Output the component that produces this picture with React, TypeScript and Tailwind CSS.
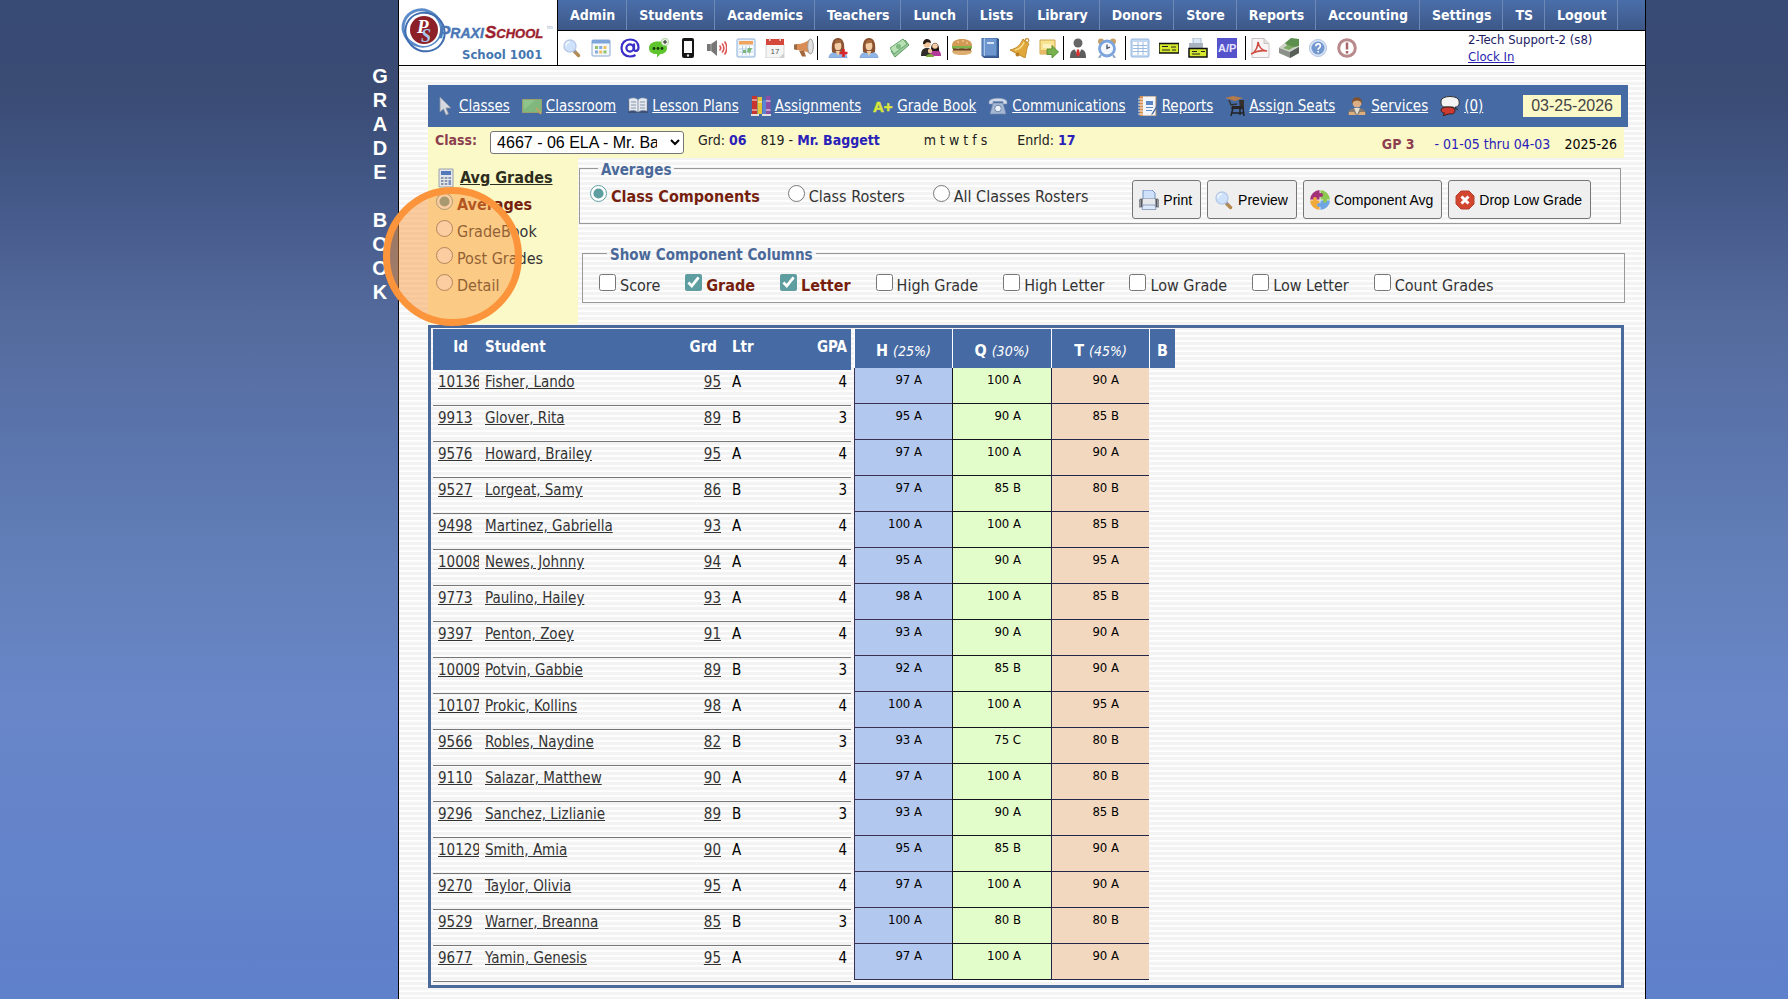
import React, {useState} from "react";

const menuItems = [
    "Admin", "Students", "Academics", "Teachers", "Lunch", "Lists", "Library",
    "Donors", "Store", "Reports", "Accounting", "Settings", "TS", "Logout",
];

const toolGroups = [
    {className: "gap-[9px] pl-1 pr-[3px]", icons: ["search", "calendar", "at", "chat", "mobile", "speaker", "schedule", "date", "megaphone"]},
    {className: "gap-[11px] pl-[10px] pr-1.5", icons: ["userAdd", "user", "money", "family"]},
    {className: "gap-[9px] px-1", icons: ["burger", "book", "bell", "noteNext"]},
    {className: "gap-[9px] pl-1 pr-2", icons: ["staff", "clock"]},
    {className: "gap-[9px] pl-1 pr-2", icons: ["sheet", "check", "printCheck", "ap"]},
    {className: "gap-[9px] pl-1", icons: ["pdf", "cash", "help", "alert"]},
];

const classLinks = [
    {icon: "cursor", label: "Classes"},
    {icon: "board", label: "Classroom"},
    {icon: "openBook", label: "Lesson Plans"},
    {icon: "books", label: "Assignments"},
    {icon: "aPlus", label: "Grade Book"},
    {icon: "phone", label: "Communications"},
    {icon: "notebook", label: "Reports"},
    {icon: "desk", label: "Assign Seats"},
    {icon: "services", label: "Services"},
    {icon: "bubbles", label: "(0)"},
];

const views = ["Averages", "GradeBook", "Post Grades", "Detail"];
const rosters = ["Class Components", "Class Rosters", "All Classes Rosters"];
const columns = ["Score", "Grade", "Letter", "High Grade", "High Letter", "Low Grade", "Low Letter", "Count Grades"];

const actions = [
    {icon: "printer", label: "Print"},
    {icon: "search", label: "Preview"},
    {icon: "puzzle", label: "Component Avg"},
    {icon: "drop", label: "Drop Low Grade"},
];

interface Student {
    id: string;
    name: string;
    grade: number;
    letter: string;
    gpa: number;
    parts: string[];
}

const students: Student[] = [
    {id: "10136", name: "Fisher, Lando", grade: 95, letter: "A", gpa: 4, parts: ["97 A", "100 A", "90 A"]},
    {id: "9913", name: "Glover, Rita", grade: 89, letter: "B", gpa: 3, parts: ["95 A", "90 A", "85 B"]},
    {id: "9576", name: "Howard, Brailey", grade: 95, letter: "A", gpa: 4, parts: ["97 A", "100 A", "90 A"]},
    {id: "9527", name: "Lorgeat, Samy", grade: 86, letter: "B", gpa: 3, parts: ["97 A", "85 B", "80 B"]},
    {id: "9498", name: "Martinez, Gabriella", grade: 93, letter: "A", gpa: 4, parts: ["100 A", "100 A", "85 B"]},
    {id: "10008", name: "Newes, Johnny", grade: 94, letter: "A", gpa: 4, parts: ["95 A", "90 A", "95 A"]},
    {id: "9773", name: "Paulino, Hailey", grade: 93, letter: "A", gpa: 4, parts: ["98 A", "100 A", "85 B"]},
    {id: "9397", name: "Penton, Zoey", grade: 91, letter: "A", gpa: 4, parts: ["93 A", "90 A", "90 A"]},
    {id: "10009", name: "Potvin, Gabbie", grade: 89, letter: "B", gpa: 3, parts: ["92 A", "85 B", "90 A"]},
    {id: "10107", name: "Prokic, Kollins", grade: 98, letter: "A", gpa: 4, parts: ["100 A", "100 A", "95 A"]},
    {id: "9566", name: "Robles, Naydine", grade: 82, letter: "B", gpa: 3, parts: ["93 A", "75 C", "80 B"]},
    {id: "9110", name: "Salazar, Matthew", grade: 90, letter: "A", gpa: 4, parts: ["97 A", "100 A", "80 B"]},
    {id: "9296", name: "Sanchez, Lizlianie", grade: 89, letter: "B", gpa: 3, parts: ["93 A", "90 A", "85 B"]},
    {id: "10129", name: "Smith, Amia", grade: 90, letter: "A", gpa: 4, parts: ["95 A", "85 B", "90 A"]},
    {id: "9270", name: "Taylor, Olivia", grade: 95, letter: "A", gpa: 4, parts: ["97 A", "100 A", "90 A"]},
    {id: "9529", name: "Warner, Breanna", grade: 85, letter: "B", gpa: 3, parts: ["100 A", "80 B", "80 B"]},
    {id: "9677", name: "Yamin, Genesis", grade: 95, letter: "A", gpa: 4, parts: ["97 A", "100 A", "90 A"]},
];

const components = [
    {code: "H", weight: "(25%)", cell: "bg-[#b3c8ee] border-[#3b3050]"},
    {code: "Q", weight: "(30%)", cell: "bg-[#e3fdca] border-[#14141c]"},
    {code: "T", weight: "(45%)", cell: "bg-[#f2d8bf] border-[#23264a]"},
];

const woman = (
    <>
        <path d="M1 20c0-4 3-6 9-6s9 2 9 6z" fill="#8fb4e6" stroke="#6f93c8" strokeWidth=".6" />
        <path d="M4 14C3 5 5 0 10 0s7 5 6 14l-3 1H7z" fill="#8a5230" />
        <ellipse cx="10" cy="8" rx="3.400" ry="4.200" fill="#f3cda6" />
        <path d="M6.500 7c1-3 5-1 7-3l-1-2H8z" fill="#a4683c" />
        <path d="M7.500 13h5L10 18z" fill="#f3cda6" />
    </>
);

const greenCheck = (
    <>
        <path d="M0 5.500h20v9.500H0z" fill="#d5e82c" stroke="#111" strokeWidth="1.500" />
        <path d="M3 8.500h6M3 12h8M13 12h4M12 9h5" stroke="#222" />
    </>
);

const icons: Record<string, React.ReactNode> = {
    search: (
        <>
            <path d="m12.500 13.500 4 4" stroke="#b58a52" strokeWidth="3.500" strokeLinecap="round" />
            <path d="m12 12 2 2" stroke="#8c94a3" strokeWidth="2" />
            <circle cx="8" cy="8" r="6" fill="#cfe2fb" stroke="#b9cbe8" strokeWidth="1.500" />
            <path d="M4 8c0-3 2-4 4-4" fill="none" stroke="#f4f9ff" strokeWidth="1.500" />
        </>
    ),
    calendar: (
        <>
            <rect x="1" y="2" width="18" height="16" rx="1" fill="#f4f8fd" stroke="#88a7cf" />
            <path d="M1 2h18v3.500H1z" fill="#7ea5da" />
            <path d="M4 8h3v3H4zM12.500 12.500h3v3h-3z" fill="#8fc06a" />
            <path d="M8.200 8h3v3h-3zM4 12.500h3v3H4z" fill="#86a9dd" />
            <path d="M12.500 8h3v3h-3zM8.200 12.500h3v3h-3z" fill="#edc15e" />
        </>
    ),
    at: (
        <>
            <circle cx="10" cy="10" r="3.600" fill="none" stroke="#3a30c8" strokeWidth="2.200" />
            <path d="M14 5.500V11c0 3 4.500 2.500 4.500-1.500C18.500 4.500 15 1.500 10 1.500S1.500 5 1.500 10s3.500 8.500 8.500 8.500c2.500 0 4-.5 5.500-1.500" fill="none" stroke="#3a30c8" strokeWidth="2.200" />
        </>
    ),
    chat: (
        <>
            <path d="M0 10c0-4 3.500-6.500 9-6.500s9 2.500 9 6.500-3.500 6-6.500 6L8 19.500V16c-5 0-8-2-8-6z" fill="#5fc52f" />
            <circle cx="5" cy="10.500" r="1.400" fill="#153a08" />
            <circle cx="9" cy="10.500" r="1.400" fill="#153a08" />
            <circle cx="13" cy="10.500" r="1.400" fill="#153a08" />
            <circle cx="16" cy="4" r="3.700" fill="#e6f3de" stroke="#98bd86" strokeWidth=".6" />
            <path d="M14 4h4M16 2v4" stroke="#222" />
        </>
    ),
    mobile: (
        <>
            <rect x="4" y="0" width="12" height="20" rx="2" fill="#161616" />
            <path d="M6 3h8v12H6z" fill="#fafafa" />
            <circle cx="10" cy="17.500" r="1.200" fill="#ddd" />
        </>
    ),
    speaker: (
        <>
            <path d="M0 6h4l6-4v16l-6-5H0z" fill="#777" />
            <path d="M4 6v7" stroke="#aaa" />
            <path d="M12.500 7.500c1.500 1.500 1.500 3.500 0 5M15 5.500c2.500 2.500 2.500 6.500 0 9M17.500 3.500c3 3.500 3 9.500 0 13" fill="none" stroke="#dc5a5a" strokeWidth="1.700" />
        </>
    ),
    schedule: (
        <>
            <rect x="1" y="1" width="18" height="18" rx="1" fill="#e9f1fb" stroke="#8cafd8" />
            <path d="M3 3h14v3.500H3z" fill="#f0a45e" />
            <path d="M3 8h14v9H3z" fill="#fff" />
            <path d="M3 11h14M3 14h14M6.500 8v9M10 8v9M13.500 8v9" stroke="#b3cbe6" />
            <path d="M7 12h3v3H7zM12 10h4l-2 5-3-1z" fill="#79b678" />
        </>
    ),
    date: (
        <>
            <path d="M1 6h18v14H1z" fill="#f5f5f5" stroke="#bbb" strokeWidth=".6" />
            <path d="M1 1h18v6H1z" fill="#d5473a" />
            <path d="M4 0h1.500v3H4zM14.500 0H16v3h-1.500z" fill="#f7dcd8" />
            <text x="5.500" y="16" fontSize="8" fontFamily="Liberation Sans, sans-serif" fill="#555">17</text>
            <path d="m19 15-5 5h5z" fill="#cfcfcf" />
        </>
    ),
    megaphone: (
        <>
            <path d="M0 6.500 3 6v6l-3-.5z" fill="#9a6a45" />
            <path d="M3 6c5 0 9-1.500 13-5v15c-4-3-8-4-13-4z" fill="#d98d55" />
            <ellipse cx="16.500" cy="8.500" rx="2.800" ry="7.500" fill="#e2e2e2" stroke="#999" />
            <path d="M5 12.500h5l2 6H8z" fill="#a3683e" />
        </>
    ),
    userAdd: (
        <>
            {woman}
            <path d="M15.500 11v8M11.500 15h8" stroke="#d8262a" strokeWidth="2.600" />
        </>
    ),
    user: woman,
    money: (
        <>
            <path d="M1 13 15 2l4 5L5 19z" fill="#9bcb9b" stroke="#5f9c66" />
            <path d="m0 10 13-9 4 5L4 16z" fill="#b9dfb4" stroke="#68a56d" />
            <circle cx="8.500" cy="8.500" r="2.500" fill="#7dba80" />
        </>
    ),
    family: (
        <>
            <path d="M0 18c0-6 2-8 6-8s5 2 5 8z" fill="#2f2c2a" />
            <path d="M9 18c0-5 2-7 5-7s6 2 6 7z" fill="#b33a98" />
            <circle cx="6" cy="6" r="3.800" fill="#f0c79c" />
            <path d="M2 6c0-7 8-6 8-1-3-1-5-1-6 1z" fill="#2b1c16" />
            <path d="M10 13C9 2 19 2 18 13z" fill="#241815" />
            <circle cx="14" cy="8" r="2.800" fill="#f3cda6" />
            <circle cx="9" cy="13" r="2.200" fill="#f0c79c" />
            <path d="M5 19c0-4 8-4 8 0z" fill="#7aa93a" />
        </>
    ),
    burger: (
        <>
            <path d="M0 8c0-5 4-7 10-7s10 2 10 7z" fill="#d39a56" />
            <path d="M0 8h20v2.500c-3 2-4-1-7 0s-4 1-6 0-5 2-7 0z" fill="#7db34a" />
            <path d="M1 10.500h18V13H1z" fill="#6e4022" />
            <path d="M0 12.500h20c0 3-3 4.500-10 4.500S0 15.500 0 12.500z" fill="#dcaf70" />
            <path d="M5 4h2M10 3h2M14 5h2" stroke="#f7dfb4" />
        </>
    ),
    book: (
        <>
            <path d="M1 0h15l2 1v19H3l-2-2z" fill="#35578c" />
            <path d="M1 0h15v18H1z" fill="#6d96cf" stroke="#40669f" />
            <path d="M3.500 0v18" stroke="#a6c3ea" />
            <path d="M6 4h7v2H6z" fill="#d5e3f6" />
        </>
    ),
    bell: (
        <>
            <path d="M0 12C8 10 10 7 13 1l6 5c-3 4-2 8-4 14z" fill="#e0a83a" stroke="#b57d20" strokeWidth=".8" />
            <path d="M5 12c5-1 8-5 9-8" fill="none" stroke="#f8dc8c" strokeWidth="1.500" />
            <circle cx="7.500" cy="16.500" r="2" fill="#b97e24" />
            <circle cx="17" cy="2.500" r="1.800" fill="none" stroke="#c58f2f" strokeWidth="1.200" />
        </>
    ),
    noteNext: (
        <>
            <path d="M1 2h15v14H1z" fill="#f8e391" stroke="#cfa44d" />
            <path d="M4 6h8v4H4z" fill="#fcf2c4" />
            <path d="M1 12h15v4H1z" fill="#e8b966" />
            <path d="M8 11h5V7.500l6.500 6.500-6.500 6v-3.500H8z" fill="#79b24c" stroke="#4b8730" strokeWidth=".8" />
        </>
    ),
    staff: (
        <>
            <path d="M2 20c0-7 2-9 8-9s8 2 8 9z" fill="#5d5d5d" />
            <circle cx="10" cy="5" r="4.500" fill="#666" />
            <path d="m6.500 11 3.500 7 3.500-7z" fill="#f7f7f7" />
            <path d="m9 11.500h2l1 5-2 2.500-2-2.500z" fill="#d63232" />
        </>
    ),
    clock: (
        <>
            <circle cx="4" cy="3.500" r="3" fill="#c7a066" />
            <circle cx="16" cy="3.500" r="3" fill="#c7a066" />
            <path d="m4 17-2 3M16 17l2 3" stroke="#8ea4c4" strokeWidth="2" />
            <circle cx="10" cy="10.500" r="7.500" fill="#f4f8fd" stroke="#7ba3dc" strokeWidth="2.800" />
            <path d="M10 6.500v4l3-1.500" fill="none" stroke="#3f4a5c" strokeWidth="1.300" />
        </>
    ),
    sheet: (
        <>
            <rect x="1" y="1" width="18" height="18" rx="1" fill="#c5d8f2" stroke="#9ab8e0" />
            <path d="M3 4h14v13H3z" fill="#fff" />
            <path d="M3 7.500h14M3 10.500h14M3 13.500h14M8 4v13M13 4v13" stroke="#9dbbe2" />
        </>
    ),
    check: greenCheck,
    printCheck: (
        <>
            <path d="M5 0h8v6H5z" fill="#dce9f8" stroke="#8fa3ba" strokeWidth=".7" />
            <path d="M1 5h14v6H1z" fill="#a9b4c0" />
            <path d="M1 10.500h18v8.500H1z" fill="#d5e82c" stroke="#111" strokeWidth="1.500" />
            <path d="M4 13.500h5M4 16h8M13 13.500h4" stroke="#222" />
        </>
    ),
    ap: (
        <>
            <path d="M0 0h20v20H0z" fill="#5553cb" />
            <text x="1" y="14" fontSize="11" fontWeight="bold" fontFamily="Liberation Sans, sans-serif" fill="#e4e3fb">A/P</text>
        </>
    ),
    pdf: (
        <>
            <path d="M2 .5h12l5 5v14H2z" fill="#f7f5f5" stroke="#c9c2c2" />
            <path d="M14 .5v5h5" fill="#e3dede" stroke="#c9c2c2" />
            <path d="M1 16c5-2 7-8 7-12 1 6 5 9 9 9-5-1-10 0-16 3z" fill="none" stroke="#cf4f45" strokeWidth="1.600" />
        </>
    ),
    cash: (
        <>
            <path d="m0 10 6-5 14 4v6l-9 5-11-5z" fill="#8b9188" />
            <path d="m0 10 11 4 9-5-8-4-6 0z" fill="#cfd3ca" />
            <path d="m11 14 9-5v6l-9 5z" fill="#585e58" />
            <path d="m6 5 6-5 8 1v7l-9 2z" fill="#5c8f4d" />
            <path d="m4 10 5-3 6 2-5 3z" fill="#7caa63" />
        </>
    ),
    help: (
        <>
            <circle cx="10" cy="10" r="8.500" fill="#d9e4f5" stroke="#b0c4e2" />
            <circle cx="10" cy="10" r="6.500" fill="#7397cf" />
            <path d="M7.800 8.200c0-3.200 4.600-3 4.600-.2 0 1.800-2.300 1.900-2.300 3.700M10.100 13v1.600" fill="none" stroke="#fff" strokeWidth="1.600" />
        </>
    ),
    alert: (
        <>
            <circle cx="10" cy="10" r="8.300" fill="#fff" stroke="#b98a8c" strokeWidth="3" />
            <path d="M10 4.500v7M10 13v2.500" stroke="#a8676b" strokeWidth="2.500" />
        </>
    ),
    cursor: (
        <path d="M5 1v15l3.500-3 2.500 6 2.500-1-2.500-6h5z" fill="#d6dae0" stroke="#8a929e" strokeWidth=".8" />
    ),
    board: (
        <>
            <path d="M.5 3.500h19v13H.5z" fill="#7fb77c" stroke="#9aa06c" />
            <path d="M1 4h12L2 14z" fill="#8fc48b" />
            <path d="m14 12 5 6" stroke="#c6a45f" strokeWidth="1.800" />
        </>
    ),
    openBook: (
        <>
            <path d="M0 5h20v12H0z" fill="#3d5078" />
            <path d="M10 4C7 1 4 2 1 3v12c3-1 6-1 9 1 3-2 6-2 9-1V3c-3-1-6-2-9 1z" fill="#e6eaf0" stroke="#9aa6b8" strokeWidth=".6" />
            <path d="M10 4v12M3 6h5M3 9h5M3 12h5M12 6h5M12 9h5M12 12h5" stroke="#8794a9" />
        </>
    ),
    books: (
        <>
            <path d="M1 0h5v19H1z" fill="#c8352f" />
            <path d="M6.500 1H11v17H6.500z" fill="#e4c535" />
            <path d="M11.500 4h3.500v14h-3.500z" fill="#5a86d4" />
            <path d="M15 0h4.500v19H15z" fill="#8d4ea6" />
            <path d="M1 4h5M1 14h5M7 6h4M15 5h4.500M15 14h4.500" stroke="#f7f2e4" />
            <path d="M0 18h8v2H0zM11 18h9v2h-9z" fill="#e4e1dc" />
        </>
    ),
    aPlus: (
        <text x="0" y="16" fontSize="15" fontWeight="bold" fontFamily="Liberation Sans, sans-serif" fill="#dbe63a" stroke="#dbe63a" strokeWidth=".6">A+</text>
    ),
    phone: (
        <>
            <path d="M1 6c0-5 18-5 18 0v2h-4V5.500H5V8H1z" fill="#cfd9e8" stroke="#7f94b5" strokeWidth=".6" />
            <path d="M5 7h10l3 11H2z" fill="#a4b7d3" stroke="#6f86a9" strokeWidth=".6" />
            <circle cx="10" cy="12.500" r="3.300" fill="#eef3fa" stroke="#6f86a9" />
        </>
    ),
    notebook: (
        <>
            <path d="M2 0h16v20H2z" fill="#f2f5fa" stroke="#a98563" />
            <path d="M2 0h3v20H2z" fill="#d98f4d" />
            <path d="M0 3h5M0 6h5M0 9h5M0 12h5M0 15h5M0 18h5" stroke="#eee" />
            <path d="M8 5h7v4H8zM8 11h7v1H8zM8 14h6v1H8z" fill="#5c86c4" />
            <path d="m19 9-5 8-1 2 2-1 5-8z" fill="#4b6ba0" />
        </>
    ),
    desk: (
        <>
            <path d="M0 2 8 0l10 2-8 3z" fill="#b47a4a" />
            <path d="m4 4 2 5 6-1" fill="none" stroke="#333" strokeWidth="1.500" />
            <path d="M14 4h5v9h-4z" fill="#34302e" />
            <path d="M7 10h11v3H6z" fill="#2a2625" />
            <path d="m8 12-2 8M15 12v7M18 12l1 8M7 17h11" stroke="#222" strokeWidth="1.500" />
        </>
    ),
    services: (
        <>
            <path d="M1 19c0-5 3-7 9-7s9 2 9 7z" fill="#857a6d" />
            <circle cx="10" cy="7" r="4.500" fill="#dcae86" />
            <path d="M5 8C4-1 16-1 15 8c-1-3-3-3.500-5-3.500S6 5 5 8z" fill="#80522c" />
            <path d="m7 12 3 7 3-7z" fill="#e4dfd3" />
            <path d="M2 16h5l2 3H2zM18 16h-5l-2 3h7z" fill="#dcae7d" />
        </>
    ),
    bubbles: (
        <>
            <path d="M1 5c0-6 18-6 18 0 1 5-2 6-4 6l3 3-5-3H5C2 11 1 9 1 5z" fill="#f4f4f4" stroke="#333" />
            <path d="M1 14c0-4 14-4 14 0s-2 4-7 4l-5 2 1.500-3C3 17 1 16 1 14z" fill="#cf3a30" stroke="#431c1c" />
        </>
    ),
    calculator: (
        <>
            <path d="M3 1h14v18H3z" fill="#e4e6ea" stroke="#9aa1ab" />
            <path d="M5 3h10v4H5z" fill="#5479ba" />
            <path d="M5 9h2.500v2H5zM8.800 9h2.500v2H8.800zM5 12h2.500v2H5zM8.800 12h2.500v2H8.800zM5 15h2.500v2H5zM8.800 15h2.500v2H8.800z" fill="#8b96ab" />
            <path d="M12.500 9H15v2h-2.500zM12.500 12H15v5h-2.500z" fill="#7f92bd" />
        </>
    ),
    printer: (
        <>
            <path d="M4 0h9l3 3v7H4z" fill="#cfe0fa" stroke="#7592c4" />
            <path d="M1 9h18l1 3v5H0v-5z" fill="#a9adb3" stroke="#6c7077" strokeWidth=".8" />
            <path d="M4 9h12v6H4z" fill="#e6e8eb" />
            <path d="M2.500 9v8M17.500 9v8" stroke="#56595e" strokeWidth="1.500" />
            <path d="M4 15h12l1 4.500H3z" fill="#dce8fb" stroke="#8093b5" strokeWidth=".8" />
        </>
    ),
    puzzle: (
        <>
            <path d="M10 10V0A10 10 0 0 0 0 10z" fill="#a3317a" />
            <path d="M10 10h10A10 10 0 0 0 10 0z" fill="#8cc751" />
            <path d="M10 10H0a10 10 0 0 0 10 10z" fill="#f0a93a" />
            <path d="M10 10v10a10 10 0 0 0 10-10z" fill="#6ea5e4" />
            <path d="M10 0v3.200M10 6.800v6.400M10 16.800V20M0 10h3.200M6.800 10h6.400M16.800 10H20" stroke="#f4f4f4" strokeWidth=".9" />
            <circle cx="11" cy="5" r="2" fill="#a3317a" />
            <circle cx="15" cy="11" r="2" fill="#8cc751" />
            <circle cx="9" cy="15" r="2" fill="#6ea5e4" />
            <circle cx="5" cy="9" r="2" fill="#f0a93a" />
        </>
    ),
    drop: (
        <>
            <path d="M6 1h8l5 5v8l-5 5H6l-5-5V6z" fill="#d2452f" stroke="#b5402f" />
            <path d="m6.500 6.500 7 7M13.500 6.500l-7 7" stroke="#fff" strokeWidth="3" />
        </>
    ),
};

function Icon({name}: { name: string }) {
    return (
        <svg viewBox="0 0 20 20" className="size-5 shrink-0" aria-hidden="true">{icons[name]}</svg>
    );
}

function Logo() {
    return (
        <svg viewBox="0 0 158 65" className="h-[65px] w-[158px] shrink-0">
            <ellipse cx="23" cy="28" rx="19" ry="18" fill="none" stroke="#5b8bc8" strokeWidth="3" transform="rotate(20 23 28)" />
            <ellipse cx="26" cy="32" rx="20" ry="19" fill="none" stroke="#3f6db0" strokeWidth="2" transform="rotate(35 26 32)" />
            <circle cx="25" cy="30" r="16" fill="#fff" />
            <circle cx="25" cy="30" r="14" fill="#8c1f28" />
            <text x="18" y="33" fontSize="19" fontWeight="bold" fontStyle="italic" fontFamily="Liberation Serif, serif" fill="#fff">P</text>
            <text x="22" y="42" fontSize="18" fontWeight="bold" fontStyle="italic" fontFamily="Liberation Serif, serif" fill="#a9c6ea">S</text>
            <g fontWeight="bold" fontStyle="italic" fontFamily="Liberation Sans, sans-serif">
                <text x="40" y="38" fill="#4a77b5" stroke="#4a77b5" strokeWidth=".4" fontSize="17">P<tspan fontSize="14">RAXI</tspan></text>
                <text x="86" y="38" fill="#9c1f2e" stroke="#9c1f2e" strokeWidth=".4" fontSize="17">S<tspan fontSize="13">CHOOL</tspan></text>
            </g>
            <text x="148" y="29" fontSize="5" fontFamily="Liberation Sans, sans-serif" fill="#8fa9cc">tm</text>
            <text x="63" y="59" fontSize="13" fontWeight="bold" fontFamily="DejaVu Sans Condensed, DejaVu Sans, sans-serif" fill="#4576b0">School 1001</text>
        </svg>
    );
}

interface ChoiceProps {
    type: "radio" | "checkbox";
    name: string;
    label: string;
    checked: boolean;
    onChange: () => void;
}

function Choice(props: ChoiceProps) {
    return (
        <label className="flex items-start gap-1 text-base leading-6 text-[#333]">
            <input type={props.type} name={props.name} checked={props.checked} onChange={props.onChange} className="size-[17px] shrink-0 accent-[#5f9ea0]" />
            <span className={props.checked ? "font-bold text-[#761f0e]" : ""}>{props.label}</span>
        </label>
    );
}

function Header() {
    return (
        <header className="flex border-b border-black bg-white">
            <Logo />
            <div className="min-w-0 flex-1 border-l border-black">
                <nav className="flex h-[31px] border-b border-black bg-linear-to-b from-[#4a6eaa] to-[#3d5888]">
                    {menuItems.map((item) => (
                        <a key={item} href="#" className="border-r border-[#6d88b5] pr-[11px] pl-3 text-sm leading-[30px] font-bold text-white">{item}</a>
                    ))}
                </nav>
                <div className="flex items-center justify-between">
                    <div className="flex h-[30px] items-center">
                        {toolGroups.map((group, index) => (
                            <div key={index} className={index > 0 ? "flex border-l border-black" : "flex"}>
                                <div className={"flex h-6 items-center " + group.className}>
                                    {group.icons.map((icon) => (
                                        <button key={icon} type="button" aria-label={icon}><Icon name={icon} /></button>
                                    ))}
                                </div>
                            </div>
                        ))}
                    </div>
                    <div className="flex w-[177px] flex-col items-start text-[13px] leading-[17px] text-[#1c1c64]">
                        <span>2-Tech Support-2 (s8)</span>
                        <a href="#" className="text-[#2a1fb0] underline">Clock In</a>
                    </div>
                </div>
            </div>
        </header>
    );
}

function ClassBar() {
    return (
        <div className="mr-1 flex h-[31px] items-start bg-[#fbf9c8] px-[7px] text-sm leading-[27px] text-[#222]">
            <label htmlFor="class" className="font-bold text-[#8c3f4f]">Class:</label>
            <select id="class" className="mt-1 ml-[13px] h-[23px] w-[194px] rounded-[3px] border border-[#767676] bg-white pr-2.5 pl-0.5 font-['Liberation_Sans',Arial,sans-serif] text-base leading-5 text-black">
                <option>4667 - 06 ELA - Mr. Baggett</option>
            </select>
            <span className="ml-3.5">Grd: <b className="text-[#2a22b8]">06</b></span>
            <span className="ml-3.5">819 - <b className="text-[#2a22b8]">Mr. Baggett</b></span>
            <span className="ml-11">m t w t f s</span>
            <span className="ml-[30px]">Enrld: <b className="text-[#2a22b8]">17</b></span>
            <div className="ml-auto flex pt-1">
                <b className="text-[#8c3f4f]">GP 3</b>
                <span className="ml-5 text-[#2a22b8]">- 01-05 thru 04-03</span>
                <span className="ml-3.5 text-black">2025-26</span>
            </div>
        </div>
    );
}

function StudentTable() {
    return (
        <table className="w-[418px] table-fixed border-separate border-spacing-0 text-[15px] leading-5">
            <colgroup>
                <col className="w-[46px]" />
                <col className="w-[200px]" />
                <col className="w-[42px]" />
                <col className="w-[60px]" />
                <col />
            </colgroup>
            <thead>
                <tr className="bg-[#466aa3] align-top text-white">
                    <th className="h-[41px] pt-2 pr-[11px] text-right">Id</th>
                    <th className="pt-2 pl-1.5 text-left">Student</th>
                    <th className="pt-2 pr-1 text-right">Grd</th>
                    <th className="pt-2 pl-[11px] text-left">Ltr</th>
                    <th className="pt-2 pr-1 text-right">GPA</th>
                </tr>
            </thead>
            <tbody>
                {students.map((student) => (
                    <tr key={student.id} className="align-top text-[#333]">
                        <td className="h-9 overflow-hidden border-b border-[#777] pt-0.5 pl-[5px]"><a href="#" className="underline">{student.id}</a></td>
                        <td className="border-b border-[#777] pt-0.5 pl-1.5"><a href="#" className="underline">{student.name}</a></td>
                        <td className="border-b border-[#777] pt-0.5 text-right"><a href="#" className="underline">{student.grade}</a></td>
                        <td className="border-b border-[#777] pt-0.5 pl-[11px] text-black">{student.letter}</td>
                        <td className="border-b border-[#777] pt-0.5 pr-1 text-right text-black">{student.gpa}</td>
                    </tr>
                ))}
            </tbody>
        </table>
    );
}

function ComponentTable() {
    return (
        <table className="w-[321px] table-fixed border-separate border-spacing-0 text-[13px] leading-5 text-black">
            <colgroup>
                <col className="w-[98px]" />
                <col className="w-[99px]" />
                <col className="w-[98px]" />
                <col />
            </colgroup>
            <thead>
                <tr className="bg-[#466aa3] align-top text-white">
                    {components.map((part) => (
                        <th key={part.code} className="h-[39px] border-l border-white pt-3 text-base leading-5">
                            {part.code} <i className="text-sm leading-5 font-normal">{part.weight}</i>
                        </th>
                    ))}
                    <th className="border-l border-white pt-3 text-base leading-5">B</th>
                </tr>
            </thead>
            <tbody>
                {students.map((student) => (
                    <tr key={student.id} className="align-top">
                        {components.map((part, index) => (
                            <td key={part.code} className={"h-9 border-b border-l pt-0.5 pr-[30px] text-right " + part.cell}>{student.parts[index]}</td>
                        ))}
                        <td></td>
                    </tr>
                ))}
            </tbody>
        </table>
    );
}

function App() {
    const [view, setView] = useState("Averages");
    const [roster, setRoster] = useState("Class Components");
    const [shown, setShown] = useState(["Grade", "Letter"]);

    const onColumnChange = (column: string) => {
        setShown(shown.includes(column) ? shown.filter((item) => item !== column) : [...shown, column]);
    }

    return (
        <div className="relative grid min-h-screen grid-cols-[398px_minmax(0,1fr)_142px] bg-[linear-gradient(#384b74_0%,#3a4b74_9%,#435887_19%,#53699b_31%,#5b76ae_45%,#6480ba_58%,#6886c8_70%,#5f80cb_100%)] font-['DejaVu_Sans_Condensed','DejaVu_Sans',sans-serif]">
            <div className="flex flex-col items-end pt-16 pr-2.5 font-['Liberation_Sans',Arial,sans-serif] text-xl leading-6 font-bold text-white">
                {"GRADE BOOK".split("").map((letter, index) => (
                    <span key={index} className="h-6 w-4 text-center">{letter}</span>
                ))}
            </div>

            <div className="border-x border-black bg-[repeating-linear-gradient(#fdfdfd_0px,#fdfdfd_2px,#f3f3f3_2px,#f3f3f3_5px)]">
                <Header />
                <main className="pt-[19px] pr-[17px] pb-2.5 pl-[29px]">
                    <nav className="flex h-[42px] items-center gap-3 bg-[#466aa3] px-[7px] text-[15px] leading-5 text-white">
                        {classLinks.map((link) => (
                            <a key={link.label} href="#" className="flex shrink-0 items-center gap-1">
                                <Icon name={link.icon} />
                                <span className="underline">{link.label}</span>
                            </a>
                        ))}
                        <span className="ml-auto h-[22px] bg-[#fbf9c8] px-2 font-['Liberation_Sans',Arial,sans-serif] text-base leading-[22px] text-[#444]">03-25-2026</span>
                    </nav>

                    <ClassBar />

                    <div className="flex">
                        <div className="flex h-[166px] w-[150px] flex-col gap-[3px] bg-[#fbf9c8] pt-2 pl-2">
                            <a href="#" className="flex h-6 items-center gap-1 text-base font-bold text-[#2d2d20]">
                                <Icon name="calculator" />
                                <span className="underline">Avg Grades</span>
                            </a>
                            {views.map((item) => (
                                <Choice key={item} type="radio" name="view" label={item} checked={view === item} onChange={() => setView(item)} />
                            ))}
                        </div>
                        <div className="min-w-0 flex-1">
                            <fieldset className="mr-[7px] ml-px h-[66px] border border-[#999] pr-[29px] pl-2.5">
                                <legend className="ml-2 px-[3px] pt-1 text-[15px] leading-4 font-bold text-[#4a6899]">Averages</legend>
                                <div className="flex items-start pt-0.5">
                                    <div className="flex gap-7 pt-[5px]">
                                        {rosters.map((item) => (
                                            <Choice key={item} type="radio" name="roster" label={item} checked={roster === item} onChange={() => setRoster(item)} />
                                        ))}
                                    </div>
                                    <div className="ml-auto flex gap-1.5 font-['Liberation_Sans',Arial,sans-serif] text-sm text-black">
                                        {actions.map((action) => (
                                            <button key={action.label} type="button" className="flex h-[39px] items-center gap-1 rounded-[3px] border border-[#767676] bg-[#efefef] pr-2 pl-1.5">
                                                <Icon name={action.icon} />
                                                {action.label}
                                            </button>
                                        ))}
                                    </div>
                                </div>
                            </fieldset>
                            <fieldset className="mt-[19px] mr-[3px] ml-1 h-[60px] border border-[#999] pl-4">
                                <legend className="ml-2 px-[3px] pt-1 text-[15px] leading-4 font-bold text-[#4a6899]">Show Component Columns</legend>
                                <div className="flex gap-[25px] pt-[11px]">
                                    {columns.map((item) => (
                                        <Choice key={item} type="checkbox" name={item} label={item} checked={shown.includes(item)} onChange={() => onColumnChange(item)} />
                                    ))}
                                </div>
                            </fieldset>
                        </div>
                    </div>

                    <div className="mt-px mr-1 flex items-start gap-[3px] border-3 border-[#4b6a9b] pt-px pb-[3px] pl-0.5">
                        <StudentTable />
                        <ComponentTable />
                    </div>
                </main>
            </div>

            <div className="pointer-events-none absolute top-[187px] left-[383px] size-[139px] rounded-full border-7 border-[#fb943a] bg-[#fb943a]/47"></div>
        </div>
    );
}

export default App;
